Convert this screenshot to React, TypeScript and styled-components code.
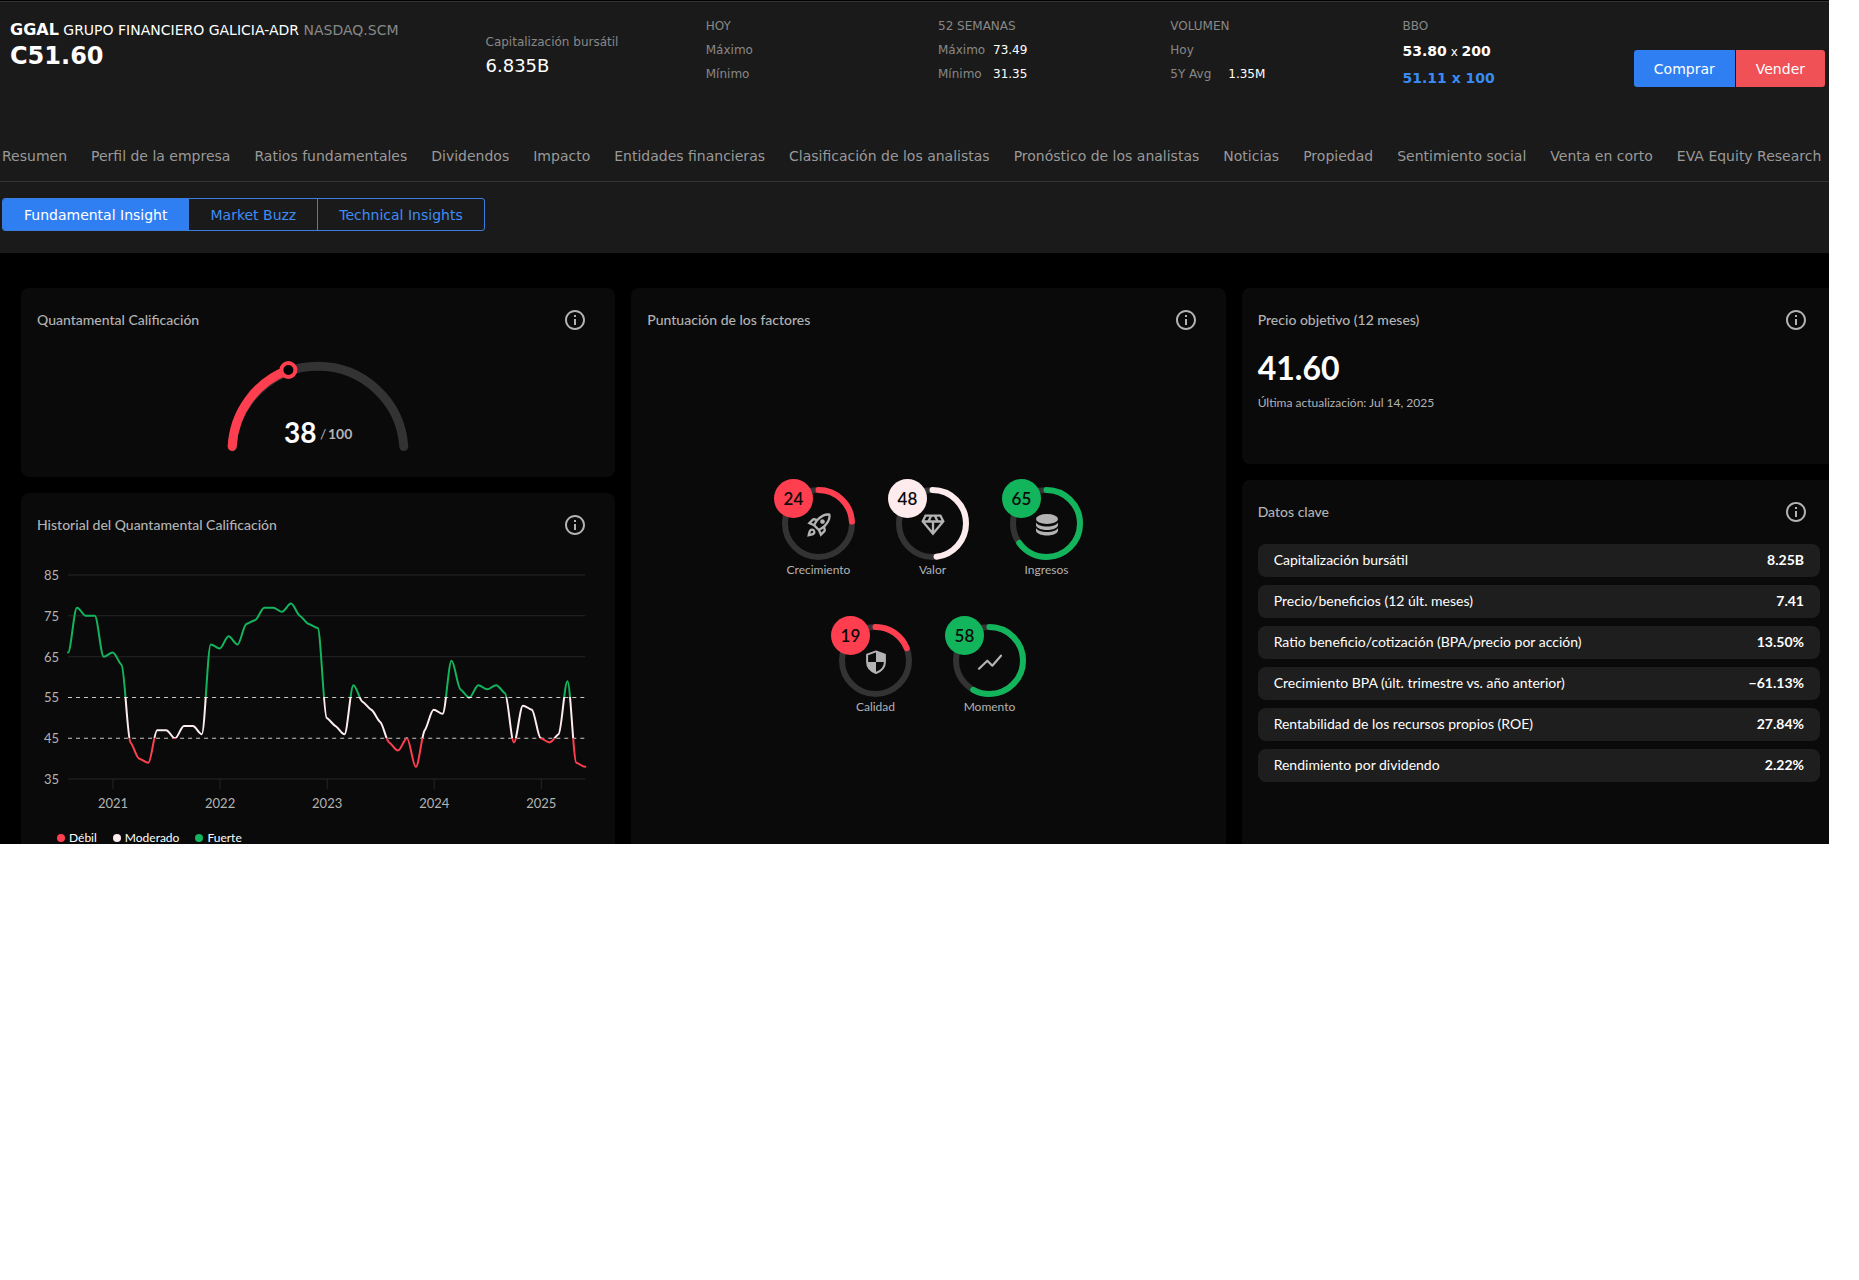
import React from 'react';
import styled, { createGlobalStyle } from 'styled-components';
import { MdInfoOutline, MdOutlineRocketLaunch, MdOutlineDiamond } from 'react-icons/md';

const ui = '"DejaVu Sans", Verdana, sans-serif';
const widget = 'Lato, "Open Sans", sans-serif';
const RED = '#ff3f4f';
const PALE = '#fdebee';
const GREEN = '#12b45c';

const GlobalStyle = createGlobalStyle`
  * { box-sizing: border-box; }
  body { margin: 0; background: #fff; }
  button { font: inherit; border: 0; cursor: pointer; }
`;

const Page = styled.div`
  margin-right: 30px;
  overflow: hidden;
  background: #000;
  color: #fff;
  font-family: ${ui};
`;

const Top = styled.div`
  margin-top: 1px;
  border-top: 1px solid #333;
  background: #1a1a1a;
  padding-bottom: 22px;
`;

const QuoteBar = styled.header`
  display: grid;
  grid-template-columns: 475fr 220fr 232fr 232fr 232fr 231fr auto;
  padding: 12px 4px 0 10px;
  height: 120px;
`;

const Name = styled.h1`
  margin: 4px 0 0;
  font-size: 14px;
  line-height: 24px;
  font-weight: 400;
  b { font-size: 16px; }
  span { color: #888; }
`;

const Price = styled.div`
  font-size: 24px;
  line-height: 28px;
  font-weight: 700;
`;

const Cap = styled.div`
  padding-top: 16px;
  font-size: 12px;
  line-height: 24px;
  color: #888;
  strong { display: block; font-size: 18px; font-weight: 400; color: #fff; }
`;

const Stats = styled.dl<{ $label: number }>`
  margin: 0;
  display: grid;
  grid-template-columns: ${(p) => p.$label}px 1fr;
  grid-auto-rows: 24px;
  align-content: start;
  font-size: 12px;
  line-height: 24px;
  white-space: nowrap;
  color: #888;
  dd { margin: 0; color: #fff; }
`;

const StatsHead = styled.div`
  grid-column: 1 / -1;
`;

const Book = styled.div`
  font-size: 12px;
  line-height: 24px;
  color: #888;
`;

const Quote = styled.div<{ $bid?: boolean }>`
  font-size: ${(p) => (p.$bid ? 14 : 12)}px;
  line-height: 26px;
  font-weight: ${(p) => (p.$bid ? 700 : 400)};
  color: ${(p) => (p.$bid ? '#3a8bf5' : '#fff')};
  b { font-size: 14px; }
`;

const Actions = styled.div`
  display: flex;
  gap: 1px;
  align-self: start;
  padding-top: 36px;
`;

const Action = styled.button<{ $sell?: boolean }>`
  height: 37px;
  padding: 0 20px;
  color: #fff;
  font-size: 14px;
  background: ${(p) => (p.$sell ? '#f05156' : '#2f7ff3')};
  border-radius: ${(p) => (p.$sell ? '0 3px 3px 0' : '3px 0 0 3px')};
`;

const Nav = styled.nav`
  display: flex;
  gap: 24px;
  padding: 22px 0 13px 2px;
  border-bottom: 1px solid #333;
  font-size: 14px;
  line-height: 24px;
  white-space: nowrap;
  a { color: #999; text-decoration: none; }
`;

const Tabs = styled.div`
  display: flex;
  width: max-content;
  margin: 16px 0 0 2px;
  border: 1px solid #3a7fe0;
  border-radius: 3px;
  overflow: hidden;
`;

const Tab = styled.button<{ $on?: boolean }>`
  height: 31px;
  padding: 0 21px;
  font-size: 14px;
  color: ${(p) => (p.$on ? '#fff' : '#3f8cf5')};
  background: ${(p) => (p.$on ? '#2f7ff3' : 'transparent')};
  & + & { border-left: 1px solid #3a7fe0; }
`;

const Board = styled.main`
  display: grid;
  grid-template-columns: repeat(3, minmax(0, 1fr));
  gap: 16px;
  padding-top: 35px;
  margin: 0 -7px 0 21px;
  font-family: ${widget};
`;

const Column = styled.div`
  display: flex;
  flex-direction: column;
  gap: 16px;
`;

const Card = styled.section<{ $open?: boolean; $min?: number }>`
  flex: ${(p) => (p.$open ? '1 0 auto' : 'none')};
  min-height: ${(p) => p.$min ?? 0}px;
  padding: 20px 16px 0;
  background: #0a0a0a;
  border-radius: ${(p) => (p.$open ? '8px 8px 0 0' : '8px')};
`;

const CardHead = styled.div`
  display: flex;
  justify-content: space-between;
  align-items: center;
  height: 24px;
  padding-right: 12px;
  color: #b3b3b3;
`;

const CardTitle = styled.h2`
  margin: 0;
  padding-bottom: 2px;
  font-size: 14px;
  font-weight: 500;
`;

const InfoButton = styled.button`
  display: flex;
  padding: 0;
  background: none;
  color: #b3b3b3;
  font-size: 24px;
`;

const GaugeBox = styled.div`
  display: flex;
  justify-content: center;
  padding-top: 24px;
`;

const ChartBox = styled.div`
  padding: 26px 0 13px;
`;

const History = styled.svg`
  display: block;
  width: 100%;
  height: auto;
  font-size: 13px;
`;

const Legend = styled.ul`
  display: flex;
  gap: 16px;
  margin: 0;
  padding: 0 0 0 20px;
  list-style: none;
  font-size: 12px;
  line-height: 12px;
`;

const LegendItem = styled.li<{ $color: string }>`
  display: flex;
  align-items: center;
  gap: 4px;
  &::before {
    content: '';
    width: 8px;
    height: 8px;
    border-radius: 50%;
    background: ${(p) => p.$color};
  }
`;

const Factors = styled.div`
  display: flex;
  flex-direction: column;
  gap: 38px;
  padding-top: 147px;
`;

const FactorRow = styled.div`
  display: flex;
  justify-content: center;
  gap: 33px;
`;

const Factor = styled.div`
  position: relative;
  width: 81px;
  padding: 8px 0 0 8px;
`;

const Ring = styled.svg`
  display: block;
`;

const Badge = styled.div<{ $color: string }>`
  position: absolute;
  left: 0;
  top: 0;
  width: 39px;
  height: 39px;
  border-radius: 50%;
  background: ${(p) => p.$color};
  color: #0a0a0a;
  font-size: 17px;
  line-height: 39px;
  font-weight: 600;
  text-align: center;
`;

const FactorLabel = styled.div`
  padding-top: 2px;
  font-size: 12px;
  line-height: 16px;
  text-align: center;
  color: #b3b3b3;
`;

const Target = styled.div`
  padding-top: 16px;
  font-size: 32px;
  line-height: 40px;
  font-weight: 700;
`;

const Updated = styled.div`
  padding-top: 7px;
  font-size: 12px;
  line-height: 16px;
  color: #b3b3b3;
`;

const KeyTable = styled.table`
  width: 100%;
  margin-top: 12px;
  border-collapse: separate;
  border-spacing: 0 8px;
  font-size: 14px;
  th, td { height: 33px; padding: 0 16px 2px; background: #1e1e1e; }
  th { text-align: left; font-weight: 400; border-radius: 8px 0 0 8px; }
  td { text-align: right; font-weight: 700; border-radius: 0 8px 8px 0; }
`;

const navItems = [
  'Resumen', 'Perfil de la empresa', 'Ratios fundamentales', 'Dividendos', 'Impacto', 'Entidades financieras',
  'Clasificación de los analistas', 'Pronóstico de los analistas', 'Noticias', 'Propiedad', 'Sentimiento social',
  'Venta en corto', 'EVA Equity Research',
];

const keyData = [
  ['Capitalización bursátil', '8.25B'],
  ['Precio/beneficios (12 últ. meses)', '7.41'],
  ['Ratio beneficio/cotización (BPA/precio por acción)', '13.50%'],
  ['Crecimiento BPA (últ. trimestre vs. año anterior)', '−61.13%'],
  ['Rentabilidad de los recursos propios (ROE)', '27.84%'],
  ['Rendimiento por dividendo', '2.22%'],
];

const scores = [
  66, 77, 75, 75, 65, 66, 63, 44, 40, 39, 47, 47, 45, 48, 48, 46, 68, 67, 70, 68, 73, 74, 77, 77, 76, 78, 75, 73, 72,
  50, 48, 46, 58, 54, 52, 49, 44, 42, 45, 38, 47, 52, 51, 64, 57, 55, 58, 57, 58, 56, 44, 53, 52, 45, 44, 46, 59, 39, 38,
];

const PLOT = { left: 31, right: 548, top: 12, step: 40.8 };
const yOf = (v: number) => PLOT.top + ((85 - v) / 10) * PLOT.step;

// Monotone curve: flat at peaks and valleys, gentle where a steep run meets a shallow one.
function curvePath(values: number[]) {
  const dx = (PLOT.right - PLOT.left) / (values.length - 1);
  const xs = values.map((_, i) => PLOT.left + i * dx);
  const ys = values.map(yOf);
  const slope = ys.map((y, i) => {
    if (i === 0 || i === ys.length - 1) return 0;
    const before = (y - ys[i - 1]) / dx;
    const after = (ys[i + 1] - y) / dx;
    return before * after <= 0 ? 0 : Math.sign(before) * Math.min(Math.abs(before), Math.abs(after)) * 0.5;
  });
  return ys.reduce((d, y, i) => {
    if (i === 0) return `M${xs[0]} ${y}`;
    const k = dx / 3;
    return `${d}C${xs[i - 1] + k} ${ys[i - 1] + slope[i - 1] * k} ${xs[i] - k} ${y - slope[i] * k} ${xs[i]} ${y}`;
  }, '');
}

function Head({ title }: { title: string }) {
  return (
    <CardHead>
      <CardTitle>{title}</CardTitle>
      <InfoButton aria-label={`Información: ${title}`}><MdInfoOutline /></InfoButton>
    </CardHead>
  );
}

function Gauge() {
  return (
    <GaugeBox>
      <svg width="184" height="100" viewBox="0 0 184 100">
        <path d="M6.2 90.5A86 86 0 0 1 177.8 90.5" fill="none" stroke="#333" strokeWidth="9" strokeLinecap="round" />
        <path d="M6.2 90.5A86 86 0 0 1 62.4 14" fill="none" stroke={RED} strokeWidth="9" strokeLinecap="round" />
        <circle cx="62.4" cy="14" r="7" fill="#000" stroke={RED} strokeWidth="4" />
        <text x="58" y="87" fill="#fff" fontSize="28" fontWeight="700">38</text>
        <text x="94" y="83" fill="#b3b3b3" fontSize="14">/</text>
        <text x="102" y="83" fill="#b3b3b3" fontSize="14" fontWeight="700">100</text>
      </svg>
    </GaugeBox>
  );
}

function HistoryChart() {
  const stop55 = (yOf(55) - yOf(85)) / (yOf(35) - yOf(85));
  const stop45 = (yOf(45) - yOf(85)) / (yOf(35) - yOf(85));
  return (
    <History viewBox="0 0 562 256">
      <defs>
        <linearGradient id="level" gradientUnits="userSpaceOnUse" x1="0" x2="0" y1={yOf(85)} y2={yOf(35)}>
          <stop offset={stop55} stopColor={GREEN} />
          <stop offset={stop55} stopColor={PALE} />
          <stop offset={stop45} stopColor={PALE} />
          <stop offset={stop45} stopColor={RED} />
        </linearGradient>
      </defs>
      {[85, 75, 65, 55, 45, 35].map((v) => {
        const dashed = v === 55 || v === 45;
        return (
          <g key={v}>
            <line x1={PLOT.left} x2={PLOT.right} y1={yOf(v)} y2={yOf(v)} stroke={dashed ? '#c8c8c8' : '#262626'} strokeDasharray={dashed ? '4 4' : undefined} />
            <text x="22" y={yOf(v) + 5} textAnchor="end" fill="#b3b3b3">{v}</text>
          </g>
        );
      })}
      {[2021, 2022, 2023, 2024, 2025].map((year, i) => (
        <g key={year}>
          <line x1={76 + i * 107} x2={76 + i * 107} y1={yOf(35)} y2={yOf(35) + 10} stroke="#262626" />
          <text x={76 + i * 107} y="245" textAnchor="middle" fill="#b3b3b3">{year}</text>
        </g>
      ))}
      <path d={curvePath(scores)} fill="none" stroke="url(#level)" strokeWidth="2" strokeLinejoin="round" strokeLinecap="round" />
    </History>
  );
}

const CoinsIcon = () => (
  <g fill="#b3b3b3">
    <ellipse cx="12" cy="6" rx="11" ry="5" />
    <path d="M1 9.500c1.500 2.600 6 4 11 4s9.500-1.400 11-4v2.500c0 2.700-4.900 5-11 5s-11-2.300-11-5z" />
    <path d="M1 15c1.500 2.600 6 4 11 4s9.500-1.400 11-4v2.500c0 2.700-4.900 5-11 5s-11-2.300-11-5z" />
  </g>
);

const ShieldIcon = () => (
  <g fill="#b3b3b3" stroke="#b3b3b3" strokeWidth="2" strokeLinejoin="round">
    <path d="M12 1.400L20.900 4.600V12c0 5-3.600 9-8.900 11-5.300-2-8.900-6-8.900-11V4.600z" fill="none" />
    <path d="M12 1.400L20.900 4.600V12H12z" stroke="none" />
    <path d="M12 12v11c-5.300-2-8.900-6-8.900-11z" stroke="none" />
  </g>
);

const TrendIcon = () => (
  <path d="M1 18.700L9.300 10.700l5 5L23 5.700" fill="none" stroke="#b3b3b3" strokeWidth="2.200" strokeLinecap="round" strokeLinejoin="round" />
);

type FactorProps = { score: number; color: string; label: string; box?: string; children: React.ReactNode };

function ScoreFactor({ score, color, label, box = '-2 -2 28 28', children }: FactorProps) {
  const r = 33.5;
  const len = 2 * Math.PI * r;
  return (
    <Factor>
      <Ring width="73" height="73" viewBox="0 0 73 73">
        <circle cx="36.5" cy="36.5" r={r} fill="none" stroke="#333" strokeWidth="6" />
        <circle
          cx="36.5" cy="36.5" r={r} fill="none" stroke={color} strokeWidth="6" strokeLinecap="round"
          strokeDasharray={`${(len * score) / 100} ${len}`} transform="rotate(-90 36.5 36.5)"
        />
        <svg x="23" y="24" width="28" height="28" viewBox={box} color="#b3b3b3">{children}</svg>
      </Ring>
      <Badge $color={color}>{score}</Badge>
      <FactorLabel>{label}</FactorLabel>
    </Factor>
  );
}

export default function App() {
  return (
    <>
      <GlobalStyle />
      <Page>
        <Top>
          <QuoteBar>
            <div>
              <Name><b>GGAL</b> GRUPO FINANCIERO GALICIA-ADR <span>NASDAQ.SCM</span></Name>
              <Price>C51.60</Price>
            </div>
            <Cap>Capitalización bursátil<strong>6.835B</strong></Cap>
            <Stats $label={55}>
              <StatsHead>HOY</StatsHead>
              <dt>Máximo</dt><dd />
              <dt>Mínimo</dt><dd />
            </Stats>
            <Stats $label={55}>
              <StatsHead>52 SEMANAS</StatsHead>
              <dt>Máximo</dt><dd>73.49</dd>
              <dt>Mínimo</dt><dd>31.35</dd>
            </Stats>
            <Stats $label={58}>
              <StatsHead>VOLUMEN</StatsHead>
              <dt>Hoy</dt><dd />
              <dt>5Y Avg</dt><dd>1.35M</dd>
            </Stats>
            <Book>
              BBO
              <Quote><b>53.80</b> x <b>200</b></Quote>
              <Quote $bid>51.11 x 100</Quote>
            </Book>
            <Actions>
              <Action>Comprar</Action>
              <Action $sell>Vender</Action>
            </Actions>
          </QuoteBar>
          <Nav>{navItems.map((n) => <a key={n} href="#">{n}</a>)}</Nav>
          <Tabs>
            <Tab $on>Fundamental Insight</Tab>
            <Tab>Market Buzz</Tab>
            <Tab>Technical Insights</Tab>
          </Tabs>
        </Top>
        <Board>
          <Column>
            <Card $min={189}>
              <Head title="Quantamental Calificación" />
              <Gauge />
            </Card>
            <Card $open>
              <Head title="Historial del Quantamental Calificación" />
              <ChartBox><HistoryChart /></ChartBox>
              <Legend>
                <LegendItem $color={RED}>Débil</LegendItem>
                <LegendItem $color={PALE}>Moderado</LegendItem>
                <LegendItem $color={GREEN}>Fuerte</LegendItem>
              </Legend>
            </Card>
          </Column>
          <Column>
            <Card $open>
              <Head title="Puntuación de los factores" />
              <Factors>
                <FactorRow>
                  <ScoreFactor score={24} color={RED} label="Crecimiento" box="0 0 24 24"><MdOutlineRocketLaunch size={24} /></ScoreFactor>
                  <ScoreFactor score={48} color={PALE} label="Valor" box="0 0 24 24"><MdOutlineDiamond size={24} /></ScoreFactor>
                  <ScoreFactor score={65} color={GREEN} label="Ingresos"><CoinsIcon /></ScoreFactor>
                </FactorRow>
                <FactorRow>
                  <ScoreFactor score={19} color={RED} label="Calidad"><ShieldIcon /></ScoreFactor>
                  <ScoreFactor score={58} color={GREEN} label="Momento"><TrendIcon /></ScoreFactor>
                </FactorRow>
              </Factors>
            </Card>
          </Column>
          <Column>
            <Card $min={176}>
              <Head title="Precio objetivo (12 meses)" />
              <Target>41.60</Target>
              <Updated>Última actualización: Jul 14, 2025</Updated>
            </Card>
            <Card $open>
              <Head title="Datos clave" />
              <KeyTable>
                <tbody>
                  {keyData.map(([k, v]) => <tr key={k}><th scope="row">{k}</th><td>{v}</td></tr>)}
                </tbody>
              </KeyTable>
            </Card>
          </Column>
        </Board>
      </Page>
    </>
  );
}
